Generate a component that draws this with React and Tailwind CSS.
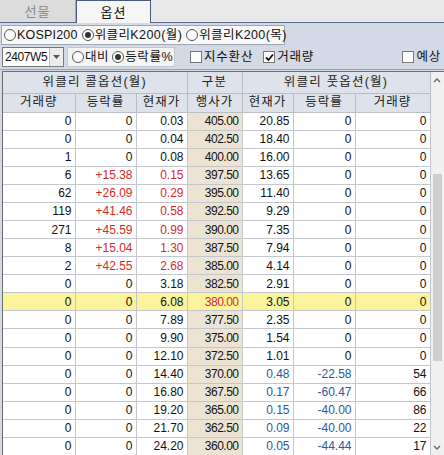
import React from "react";

const rows = [
  ["0", "0", "0.03", "405.00", "20.85", "0", "0"],
  ["0", "0", "0.04", "402.50", "18.40", "0", "0"],
  ["1", "0", "0.08", "400.00", "16.00", "0", "0"],
  ["6", "+15.38", "0.15", "397.50", "13.65", "0", "0"],
  ["62", "+26.09", "0.29", "395.00", "11.40", "0", "0"],
  ["119", "+41.46", "0.58", "392.50", "9.29", "0", "0"],
  ["271", "+45.59", "0.99", "390.00", "7.35", "0", "0"],
  ["8", "+15.04", "1.30", "387.50", "7.94", "0", "0"],
  ["2", "+42.55", "2.68", "385.00", "4.14", "0", "0"],
  ["0", "0", "3.18", "382.50", "2.91", "0", "0"],
  ["0", "0", "6.08", "380.00", "3.05", "0", "0"],
  ["0", "0", "7.89", "377.50", "2.35", "0", "0"],
  ["0", "0", "9.90", "375.00", "1.54", "0", "0"],
  ["0", "0", "12.10", "372.50", "1.01", "0", "0"],
  ["0", "0", "14.40", "370.00", "0.48", "-22.58", "54"],
  ["0", "0", "16.80", "367.50", "0.17", "-60.47", "66"],
  ["0", "0", "19.20", "365.00", "0.15", "-40.00", "86"],
  ["0", "0", "21.70", "362.50", "0.09", "-40.00", "22"],
  ["0", "0", "24.20", "360.00", "0.05", "-44.44", "17"],
];

const font = { fontFamily: '"Liberation Sans", "Noto Sans CJK KR", sans-serif' };

// small radio circle
const Radio = ({ on }) => (
  <span className="inline-flex shrink-0 items-center justify-center w-[12px] h-[12px] rounded-full border border-[#555] bg-white mr-[1px]">
    {on && <span className="w-[6px] h-[6px] rounded-full bg-[#333]" />}
  </span>
);

const Check = ({ on }) => (
  <span className="inline-flex shrink-0 items-center justify-center w-[12px] h-[12px] border border-[#777] bg-white mr-[2px]">
    {on && (
      <svg width="9" height="9" viewBox="0 0 9 9">
        <path d="M1 4.5 L3.5 7 L8 1.5" stroke="#111" strokeWidth="1.8" fill="none" />
      </svg>
    )}
  </span>
);

const colColor = (v) => {
  if (v.startsWith("+")) return "text-[#d42a2a]";
  if (v.startsWith("-")) return "text-[#2f55a4]";
  return "text-[#111]";
};

const App = () => {
  return (
    <div
      className="w-[444px] h-[455px] overflow-hidden bg-[#d3dae6] text-[12px] text-[#111] leading-none whitespace-nowrap"
      style={font}
    >
      {/* Tabs */}
      <div className="flex h-[23px] bg-[#e8e8e8] border-b border-[#5b6a8a]">
        <div className="w-[76px] flex items-center justify-center bg-[#dcdcdc] text-[#8a8a8a] text-[13px] tracking-[1px] border-r border-[#aaa]">
          선물
        </div>
        <div className="w-[75px] flex items-center justify-center bg-[#f6f6f6] text-[13px] tracking-[1px] border-l border-t border-r border-[#4b5a7a] -mb-[1px]">
          옵션
        </div>
      </div>

      {/* Radio row */}
      <div className="h-[22px] pt-[2px] pl-[1px]">
        <div className="w-[284px] h-[20px] flex items-center gap-[4px] pl-[2px] bg-[#f8f8f8] border border-[#a0a6b0] text-[12.5px]">
          <span className="flex items-center tracking-[0.2px]"><Radio />KOSPI200</span>
          <span className="flex items-center tracking-[0.4px]"><Radio on />위클리K200(월)</span>
          <span className="flex items-center tracking-[0.4px]"><Radio />위클리K200(목)</span>
        </div>
      </div>

      {/* Option row */}
      <div className="h-[25px] flex items-center pl-[2px] border-b border-[#9aa0aa]">
        <div className="w-[62px] h-[20px] flex bg-white border border-[#7a7a7a]">
          <span className="flex-1 flex items-center pl-[2px] text-[12px] tracking-[-0.4px]">2407W5</span>
          <span className="w-[14px] flex items-center justify-center bg-[#ececec] border-l border-[#bbb]">
            <svg width="7" height="4" viewBox="0 0 7 4">
              <path d="M0 0 L7 0 L3.5 4 Z" fill="#555" />
            </svg>
          </span>
        </div>
        <div className="ml-[3px] w-[108px] h-[20px] flex items-center gap-[3px] pl-[4px] bg-[#f4f4f4] border border-[#c4c8d0] text-[12.5px] tracking-[0.6px]">
          <span className="flex items-center"><Radio />대비</span>
          <span className="flex items-center"><Radio on />등락률%</span>
        </div>
        <span className="ml-[15px] flex items-center text-[12.5px] tracking-[0.8px]"><Check />지수환산</span>
        <span className="ml-[10px] flex items-center text-[12.5px] tracking-[0.8px]"><Check on />거래량</span>
        <span className="ml-auto mr-[3px] flex items-center text-[12.5px] tracking-[0.8px]"><Check />예상</span>
      </div>

      {/* Table + scrollbar */}
      <div className="flex mt-[1px] ml-[2px] border-l border-t border-[#6e6e6e]">
        <table className="table-fixed border-collapse w-[427px]">
          <colgroup>
            <col className="w-[72px]" />
            <col className="w-[61px]" />
            <col className="w-[51px]" />
            <col className="w-[55px]" />
            <col className="w-[51px]" />
            <col className="w-[62px]" />
            <col className="w-[75px]" />
          </colgroup>
          <thead className="bg-[#dde2eb] text-[12.5px] text-[#222]">
            <tr className="h-[21px]">
              <th colSpan={3} className="font-normal tracking-[1.2px] border border-[#b9bdc5] border-t-0 border-l-0">위클리 콜옵션(월)</th>
              <th className="font-normal tracking-[1.2px] border border-[#b9bdc5] border-t-0">구분</th>
              <th colSpan={3} className="font-normal tracking-[1.2px] border border-[#b9bdc5] border-t-0">위클리 풋옵션(월)</th>
            </tr>
            <tr className="h-[19px]">
              {["거래량", "등락률", "현재가", "행사가", "현재가", "등락률", "거래량"].map((h, i) => (
                <th key={i} className={`font-normal tracking-[1px] border border-[#b9bdc5] ${i === 0 ? "border-l-0" : ""}`}>
                  {h}
                </th>
              ))}
            </tr>
          </thead>
          <tbody>
            {rows.map((r, ri) => {
              const atm = r[3] === "380.00";
              return (
                <tr key={ri} className={`h-[18px] ${atm ? "bg-[#fbf49c]" : "bg-white"}`}>
                  {r.map((v, ci) => {
                    let color = colColor(v);
                    if (ci === 2 && r[1].startsWith("+")) color = "text-[#d42a2a]";
                    if (ci === 4 && r[5].startsWith("-")) color = "text-[#2f55a4]";
                    if (ci === 3) color = atm ? "text-[#d42a2a]" : "text-[#111]";
                    const bg = ci === 3 && !atm ? "bg-[#ede3d2]" : "";
                    return (
                      <td
                        key={ci}
                        className={`text-right pr-[3px] border border-[#c3c6cc] ${ci === 0 ? "border-l-0" : ""} ${color} ${bg} ${ci === 3 ? "tracking-[-0.5px]" : ""}`}
                      >
                        {v}
                      </td>
                    );
                  })}
                </tr>
              );
            })}
          </tbody>
        </table>

        {/* Scrollbar */}
        <div className="w-[15px] h-[384px] flex flex-col bg-[#f0f0f0]">
          <div className="h-[17px] flex items-center justify-center">
            <svg width="8" height="5" viewBox="0 0 8 5">
              <path d="M1 4 L4 1 L7 4" stroke="#666" strokeWidth="1.3" fill="none" />
            </svg>
          </div>
          <div className="h-[85px]" />
          <div className="mx-[2px] h-[187px] bg-[#cdcdcd]" />
          <div className="flex-1" />
          <div className="h-[17px] flex items-center justify-center">
            <svg width="8" height="5" viewBox="0 0 8 5">
              <path d="M1 1 L4 4 L7 1" stroke="#666" strokeWidth="1.3" fill="none" />
            </svg>
          </div>
        </div>
      </div>
    </div>
  );
};

export default App;
